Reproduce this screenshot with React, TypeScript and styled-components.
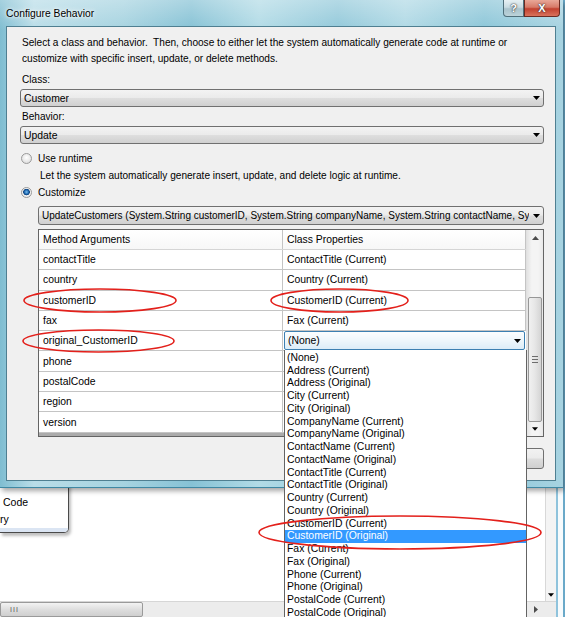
import styled, { createGlobalStyle } from "styled-components";

const GlobalStyle = createGlobalStyle`
  html, body {
    margin: 0;
    padding: 0;
  }
  body {
    font-family: "Liberation Sans", Arial, sans-serif;
    font-size: 10.1px;
    color: #000;
    background: #fff;
  }
`;

const Desktop = styled.div`
  position: relative;
  width: 565px;
  height: 617px;
  overflow: hidden;
  background: #fff;
`;

/* ---------- application behind the dialog ---------- */

const BackWindow = styled.div`
  position: absolute;
  inset: 0;
  display: flex;
`;

const Workspace = styled.div`
  flex: 1;
  display: flex;
  flex-direction: column;
`;

const Canvas = styled.div`
  flex: 1;
  display: flex;
  justify-content: space-between;
  align-items: flex-start;
  padding-top: 470px;
`;

const SidePanel = styled.div`
  width: 69px;
  height: 63px;
  box-sizing: border-box;
  display: flex;
  flex-direction: column;
  justify-content: flex-end;
  border: 1px solid #4a4a4a;
  border-left: none;
  border-radius: 0 0 5px 0;
  background: #fff;
  overflow: hidden;
  box-shadow: 2px 3px 3px rgba(0, 0, 0, 0.25);
`;

// only the tail of each entry shows, the rest is scrolled off to the left
const PanelItem = styled.div<{ $indent: number }>`
  padding-left: ${(p) => p.$indent}px;
  line-height: 17px;
  font-size: 10.5px;
  white-space: nowrap;
`;

const PanelFooter = styled.div`
  height: 4px;
  background: #dbe5f3;
`;

const SideScroll = styled.div`
  width: 11px;
  align-self: stretch;
  box-sizing: border-box;
  border-left: 1px solid #d8d8d8;
  background: #f4f4f4;
  display: flex;
  flex-direction: column;
  justify-content: flex-end;
  align-items: center;
  padding-bottom: 4px;
`;

const HScroll = styled.div`
  height: 15px;
  display: flex;
  align-items: stretch;
  background: #ececec;
  border-top: 1px solid #d6d6d6;
`;

const HThumb = styled.div`
  width: 143px;
  box-sizing: border-box;
  border: 1px solid #9a9a9a;
  border-radius: 2px;
  background: linear-gradient(#f3f3f3, #dcdcdc 55%, #cfcfcf);
  display: flex;
  align-items: center;
  padding-left: 9px;
  font-size: 7px;
  color: #555;
  letter-spacing: 1px;
`;

const HTrack = styled.div`
  flex: 1;
`;

const HArrow = styled.div`
  width: 22px;
  display: flex;
  align-items: center;
  justify-content: flex-start;
  padding-left: 2px;
`;

const FrameEdge = styled.div`
  width: 9px;
  box-sizing: border-box;
  border-left: 2px solid #8fc3dc;
  border-right: 2px solid #6aa9c9;
  background: #f7fbfd;
`;

/* ---------- dialog ---------- */

const Dialog = styled.div`
  position: absolute;
  left: 0;
  top: 0;
  width: 563px;
  height: 488px;
  box-sizing: border-box;
  display: flex;
  flex-direction: column;
  padding: 0 7px 6px 6px;
  background: linear-gradient(
      rgba(255, 255, 255, 0.3),
      rgba(255, 255, 255, 0) 30px
    ),
    linear-gradient(
      90deg,
      #7fbdd1 0%,
      #b9dde8 6%,
      #a6d3e0 22%,
      #86c2d5 34%,
      #b2dbe6 46%,
      #93c9da 60%,
      #b0d9e5 72%,
      #8cc6d8 86%,
      #a7d3e1 100%
    );
  border-bottom: 1px solid #3f88a3;
  box-shadow: 2px 3px 5px rgba(0, 0, 0, 0.35);
`;

const TitleBar = styled.div`
  height: 26px;
  display: flex;
  justify-content: space-between;
  align-items: flex-start;
`;

const Title = styled.div`
  padding-top: 8px;
  font-size: 10.3px;
  text-shadow: 0 0 6px #fff, 0 0 3px #fff;
`;

const CaptionButtons = styled.div`
  display: flex;
  margin-right: -4px;
`;

const CaptionButton = styled.div<{ $close?: boolean }>`
  width: ${(p) => (p.$close ? 36 : 21)}px;
  height: 17px;
  box-sizing: border-box;
  display: flex;
  align-items: center;
  justify-content: center;
  border: 1px solid ${(p) => (p.$close ? "#6b2b22" : "#4f6f7a")};
  border-top: none;
  border-radius: ${(p) => (p.$close ? "0 0 4px 0" : "0 0 0 4px")};
  background: ${(p) =>
    p.$close
      ? "linear-gradient(#e9a898 0%, #d77a68 45%, #c2412f 55%, #d9735c 100%)"
      : "linear-gradient(#e6f0f3 0%, #c9dce2 45%, #a9c3cc 55%, #bcd3da 100%)"};
  color: #fff;
  font-weight: bold;
  font-size: 11px;
  text-shadow: 0 0 2px #333, 0 0 1px #333;
`;

const Client = styled.div`
  flex: 1;
  display: flex;
  flex-direction: column;
  box-sizing: border-box;
  background: #f0f0f0;
  border: 1px solid #4f7f91;
  padding: 8px 11px 0 13px;
`;

const Intro = styled.p`
  margin: 0;
  padding-left: 2px;
  line-height: 16px;
`;

const Label = styled.div<{ $gap?: number }>`
  margin-top: ${(p) => p.$gap ?? 2}px;
  padding-left: 2px;
  line-height: 16px;
`;

const Combo = styled.div<{
  $indent?: number;
  $height?: number;
  $gap?: number;
  $size?: number;
}>`
  margin-top: ${(p) => p.$gap ?? 1}px;
  margin-left: ${(p) => p.$indent ?? 0}px;
  height: ${(p) => p.$height ?? 18}px;
  box-sizing: border-box;
  display: flex;
  align-items: center;
  justify-content: space-between;
  gap: 4px;
  padding: 0 3px 0 3px;
  border: 1px solid #707070;
  border-radius: 3px;
  background: linear-gradient(#f3f3f3 0%, #ebebeb 48%, #dedede 52%, #d0d0d0 100%);
  font-size: ${(p) => p.$size ?? 10.4}px;
  white-space: nowrap;
  overflow: hidden;
`;

const ComboText = styled.span`
  overflow: hidden;
`;

const RadioRow = styled.div<{ $gap?: number }>`
  margin-top: ${(p) => p.$gap ?? 0}px;
  display: flex;
  align-items: center;
  gap: 6px;
  height: 16px;
  padding-left: 1px;
`;

const RadioDot = styled.span<{ $checked?: boolean }>`
  width: 11px;
  height: 11px;
  box-sizing: border-box;
  border-radius: 50%;
  border: 1px solid #9a9a9a;
  background: ${(p) =>
    p.$checked
      ? "radial-gradient(circle at 50% 45%, #7cc0f0 0, #1a64ad 2.2px, #0e3f78 3px, #f4f4f4 3.6px, #e0e0e0 100%)"
      : "radial-gradient(circle at 50% 40%, #ffffff 0, #e6e6e6 60%, #d2d2d2 100%)"};
`;

const Hint = styled.div`
  margin-top: 2px;
  padding-left: 20px;
  line-height: 16px;
`;

/* ---------- grid ---------- */

const Grid = styled.div`
  margin: 4px 0 0 18px;
  height: 208px;
  box-sizing: border-box;
  display: flex;
  border: 1px solid #646464;
  background: #ababab;
`;

const Table = styled.div`
  flex: 1;
  display: flex;
  flex-direction: column;
`;

const GridRow = styled.div<{ $header?: boolean }>`
  height: ${(p) => (p.$header ? "20px" : "20.3px")};
  box-sizing: border-box;
  display: grid;
  grid-template-columns: 244px 1fr;
  background: ${(p) => (p.$header ? "linear-gradient(#ffffff, #f7f7f7)" : "#fff")};
  border-bottom: 1px solid ${(p) => (p.$header ? "#d5d5d5" : "#c4c4c4")};
`;

const Cell = styled.div`
  position: relative;
  display: flex;
  align-items: center;
  padding-left: 4px;
  border-right: 1px solid #c4c4c4;
  font-size: 10.4px;
  white-space: nowrap;
`;

const EditCell = styled.div`
  position: relative;
  display: flex;
  align-items: stretch;
  padding: 0 1px 0 1px;
`;

const EditCombo = styled.div`
  flex: 1;
  box-sizing: border-box;
  display: flex;
  align-items: center;
  justify-content: space-between;
  padding: 0 3px;
  border: 1px solid #3c7fb1;
  border-radius: 2px;
  background: linear-gradient(#fbfdfe, #eef6fb 50%, #dcecf7);
  font-size: 10.4px;
`;

const DropList = styled.div`
  position: absolute;
  top: 100%;
  left: 1px;
  width: 243px;
  height: 280px;
  box-sizing: border-box;
  padding-top: 1.5px;
  border: 1px solid #646464;
  border-top: none;
  background: #fff;
  z-index: 5;
`;

const DropItem = styled.div<{ $selected?: boolean }>`
  height: 12.75px;
  line-height: 12.75px;
  padding-left: 2px;
  font-size: 10.4px;
  white-space: nowrap;
  background: ${(p) => (p.$selected ? "#3399ff" : "transparent")};
  color: ${(p) => (p.$selected ? "#fff" : "#000")};
`;

const VScroll = styled.div`
  width: 16px;
  display: flex;
  flex-direction: column;
  background: linear-gradient(90deg, #e3e3e3, #f4f4f4 30%, #f4f4f4 70%, #e8e8e8);
  border-left: 1px solid #e0e0e0;
`;

const ScrollArrow = styled.div<{ $h: number }>`
  height: ${(p) => p.$h}px;
  display: flex;
  align-items: center;
  justify-content: center;
`;

const ScrollTrack = styled.div`
  flex: 1;
  padding-top: 51px;
`;

const ScrollThumb = styled.div`
  height: 125px;
  margin: 0 1px;
  box-sizing: border-box;
  border: 1px solid #979797;
  border-radius: 2px;
  background: linear-gradient(90deg, #f1f1f1, #e6e6e6 50%, #d4d4d4);
  display: flex;
  align-items: center;
  justify-content: center;
`;

const Grip = styled.div`
  width: 6px;
  height: 7px;
  background: repeating-linear-gradient(#6d6d6d 0 1px, transparent 1px 3px);
`;

const ButtonRow = styled.div`
  margin-top: 11px;
  display: flex;
  justify-content: flex-end;
  gap: 6px;
`;

const PushButton = styled.div`
  width: 75px;
  height: 21px;
  box-sizing: border-box;
  border: 1px solid #707070;
  border-radius: 3px;
  background: linear-gradient(#f2f2f2 0%, #ebebeb 48%, #dddddd 52%, #cfcfcf 100%);
`;

const Annotations = styled.svg`
  position: absolute;
  left: 0;
  top: 0;
  pointer-events: none;
  z-index: 10;
`;

const DownArrow = ({ w = 7 }: { w?: number }) => (
  <svg width={w} height={4} viewBox="0 0 7 4" style={{ flexShrink: 0 }}>
    <path d="M0 0h7L3.5 4z" fill="#000" />
  </svg>
);

const UpArrow = () => (
  <svg width={7} height={4} viewBox="0 0 7 4">
    <path d="M0 4h7L3.5 0z" fill="#4d4d4d" />
  </svg>
);

const RightArrow = () => (
  <svg width={4} height={7} viewBox="0 0 4 7">
    <path d="M0 0v7L4 3.5z" fill="#4d4d4d" />
  </svg>
);

// rows under the open list have their property hidden by it
const gridRows = [
  { arg: "contactTitle", prop: "ContactTitle (Current)" },
  { arg: "country", prop: "Country (Current)" },
  { arg: "customerID", prop: "CustomerID (Current)" },
  { arg: "fax", prop: "Fax (Current)" },
  { arg: "original_CustomerID", prop: "(None)", editing: true },
  { arg: "phone", prop: "" },
  { arg: "postalCode", prop: "" },
  { arg: "region", prop: "" },
  { arg: "version", prop: "" },
];

const fields = [
  "Address",
  "City",
  "CompanyName",
  "ContactName",
  "ContactTitle",
  "Country",
  "CustomerID",
  "Fax",
  "Phone",
  "PostalCode",
];

const options = [
  "(None)",
  ...fields.flatMap((f) => [`${f} (Current)`, `${f} (Original)`]),
];

export default function App() {
  return (
    <Desktop>
      <GlobalStyle />

      <BackWindow>
        <Workspace>
          <Canvas>
            <SidePanel>
              <PanelItem $indent={3}>Code</PanelItem>
              <PanelItem $indent={0}>ry</PanelItem>
              <PanelFooter />
            </SidePanel>
            <SideScroll>
              <DownArrow w={6} />
            </SideScroll>
          </Canvas>
          <HScroll>
            <HThumb>III</HThumb>
            <HTrack />
            <HArrow>
              <RightArrow />
            </HArrow>
          </HScroll>
        </Workspace>
        <FrameEdge />
      </BackWindow>

      <Dialog>
        <TitleBar>
          <Title>Configure Behavior</Title>
          <CaptionButtons>
            <CaptionButton>?</CaptionButton>
            <CaptionButton $close>X</CaptionButton>
          </CaptionButtons>
        </TitleBar>

        <Client>
          <Intro>
            Select a class and behavior.&nbsp; Then, choose to either let the
            system automatically generate code at runtime or
            <br />
            customize with specific insert, update, or delete methods.
          </Intro>

          <Label $gap={5}>Class:</Label>
          <Combo>
            <ComboText>Customer</ComboText>
            <DownArrow />
          </Combo>

          <Label>Behavior:</Label>
          <Combo>
            <ComboText>Update</ComboText>
            <DownArrow />
          </Combo>

          <RadioRow $gap={6}>
            <RadioDot />
            Use runtime
          </RadioRow>
          <Hint>
            Let the system automatically generate insert, update, and delete
            logic at runtime.
          </Hint>
          <RadioRow>
            <RadioDot $checked />
            Customize
          </RadioRow>

          <Combo $indent={18} $height={19} $gap={6} $size={10}>
            <ComboText>
              UpdateCustomers (System.String customerID, System.String
              companyName, System.String contactName, Sy
            </ComboText>
            <DownArrow />
          </Combo>

          <Grid>
            <Table>
              <GridRow $header>
                <Cell>Method Arguments</Cell>
                <Cell>Class Properties</Cell>
              </GridRow>
              {gridRows.map((r) => (
                <GridRow key={r.arg}>
                  <Cell>{r.arg}</Cell>
                  {r.editing ? (
                    <EditCell>
                      <EditCombo>
                        <span>{r.prop}</span>
                        <DownArrow />
                      </EditCombo>
                      <DropList>
                        {options.map((o) => (
                          <DropItem
                            key={o}
                            $selected={o === "CustomerID (Original)"}
                          >
                            {o}
                          </DropItem>
                        ))}
                      </DropList>
                    </EditCell>
                  ) : (
                    <Cell>{r.prop}</Cell>
                  )}
                </GridRow>
              ))}
            </Table>
            <VScroll>
              <ScrollArrow $h={17}>
                <UpArrow />
              </ScrollArrow>
              <ScrollTrack>
                <ScrollThumb>
                  <Grip />
                </ScrollThumb>
              </ScrollTrack>
              <ScrollArrow $h={14}>
                <DownArrow w={6} />
              </ScrollArrow>
            </VScroll>
          </Grid>

          <ButtonRow>
            <PushButton />
            <PushButton />
          </ButtonRow>
        </Client>
      </Dialog>

      <Annotations width={565} height={617} viewBox="0 0 565 617">
        <g fill="none" stroke="#e3201b" strokeWidth={1.6}>
          <ellipse cx={100} cy={300.5} rx={76} ry={11.5} />
          <ellipse cx={339.5} cy={300.5} rx={68.5} ry={11.5} />
          <ellipse cx={98.5} cy={341} rx={75.5} ry={11} />
          <ellipse cx={400} cy={532.5} rx={141} ry={16.5} />
        </g>
      </Annotations>
    </Desktop>
  );
}
